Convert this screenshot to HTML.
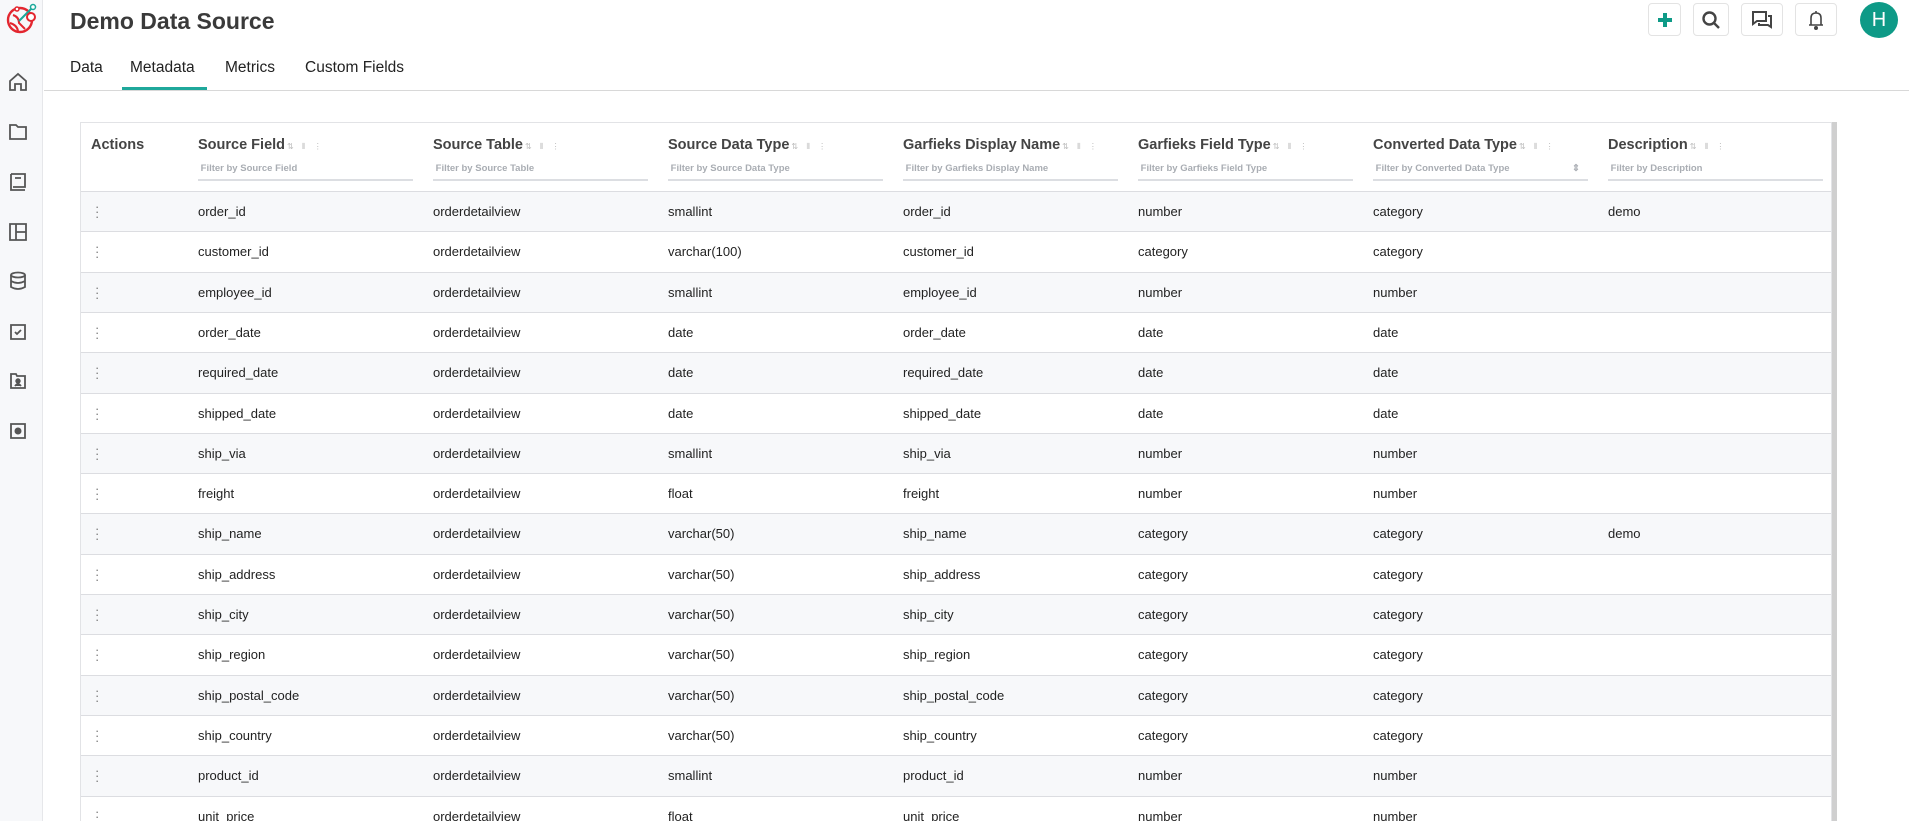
<!DOCTYPE html>
<html><head><meta charset="utf-8"><style>
*{margin:0;padding:0;box-sizing:border-box}
html,body{width:1909px;height:821px;overflow:hidden}
body{background:#fff;font-family:"Liberation Sans",sans-serif;color:#222;position:relative}
.side{position:absolute;left:0;top:0;width:43px;height:821px;background:#f7f8fa;border-right:1px solid #e6e7ea}
.side svg{position:absolute;left:8px}
.title{position:absolute;left:70px;top:8px;font-size:23px;font-weight:bold;color:#3a3a3a}
.tabs{position:absolute;left:44px;top:0;right:0;height:91px;border-bottom:1px solid #d8d8d8}
.tab{position:absolute;top:59px;font-size:15.5px;color:#222}
.ul{position:absolute;left:122px;top:87px;width:85px;height:3px;background:#1fa89b}
.ib{position:absolute;top:3px;height:33px;border:1px solid #e3e3e3;border-radius:4px;background:#fff}
.ib svg{position:absolute;left:50%;top:50%;transform:translate(-50%,-50%)}
.av{position:absolute;left:1860px;top:2px;width:38px;height:36px;border-radius:50%;background:#0e9a87;color:#fff;font-size:20px;text-align:center;line-height:36px}
.tbl{position:absolute;left:80px;top:122px;width:1752px;height:699px;border:1px solid #e2e3e6;border-bottom:none;overflow:hidden}
.sb{position:absolute;left:1832px;top:122px;width:5px;height:699px;background:#cfcfcf}
.hd{position:absolute;top:14px;font-size:14.5px;font-weight:bold;color:#444}
.hd i{font-style:normal;font-size:8px;color:#bbb;font-weight:normal;margin-left:2px;letter-spacing:3px}
.fl{position:absolute;top:40px;width:215px;height:18px;border-bottom:2px solid #dcdee2;font-size:9.5px;font-weight:bold;color:#a9adb3}
.row{position:absolute;left:0;width:1752px;height:41px;border-top:1px solid #dcdde1;font-size:13px}
.row span{position:absolute;top:12px}
.row .d{left:14px;top:12px;color:#777;font-size:13px;line-height:5px;width:4px;text-align:center}
</style></head><body>
<div class="side">
<svg style="left:5px;top:3px" width="32" height="32" viewBox="0 0 32 32"><circle cx="15" cy="17" r="12" fill="none" stroke="#e3262f" stroke-width="2.4"/><path d="M5 20 Q12 22 13 28 M8 12 Q14 14 14 20 L20 26" fill="none" stroke="#e3262f" stroke-width="2"/><path d="M14 18 L27 5" stroke="#1aa89a" stroke-width="2"/><circle cx="28" cy="4" r="2.5" fill="#fff" stroke="#1aa89a" stroke-width="1.5"/><circle cx="26" cy="14" r="4" fill="#fff" stroke="#e3262f" stroke-width="2"/><circle cx="12" cy="6" r="2" fill="#fff" stroke="#e3262f" stroke-width="1.5"/></svg>
<svg style="top:72px" width="20" height="20" viewBox="0 0 20 20" fill="none" stroke="#555" stroke-width="1.8"><path d="M2 9 L10 2 L18 9 V18 H13 V12 H7 V18 H2 Z"/></svg>
<svg style="top:122px" width="20" height="20" viewBox="0 0 20 20" fill="none" stroke="#555" stroke-width="1.8"><path d="M2 3 H8 L10 5 H18 V17 H2 Z"/></svg>
<svg style="top:172px" width="20" height="20" viewBox="0 0 20 20" fill="none" stroke="#555" stroke-width="1.8"><path d="M3 2 H17 V15 H5 M3 2 V18 H17 M7 6 H13"/></svg>
<svg style="top:222px" width="20" height="20" viewBox="0 0 20 20" fill="none" stroke="#555" stroke-width="1.8"><path d="M2 2 H18 V18 H2 Z M8 2 V18 M8 10 H18"/></svg>
<svg style="top:271px" width="20" height="20" viewBox="0 0 20 20" fill="none" stroke="#555" stroke-width="1.8"><ellipse cx="10" cy="4" rx="7" ry="2.5"/><path d="M3 4 V16 Q10 20 17 16 V4 M3 10 Q10 14 17 10"/></svg>
<svg style="top:322px" width="20" height="20" viewBox="0 0 20 20" fill="none" stroke="#555" stroke-width="1.8"><path d="M3 3 H17 V17 H3 Z M7 10 L9 12 L13 8"/></svg>
<svg style="top:371px" width="20" height="20" viewBox="0 0 20 20" fill="none" stroke="#555" stroke-width="1.8"><path d="M3 3 H8 L9 5 H17 V17 H3 Z"/><circle cx="10" cy="10" r="1.8" fill="#555"/><path d="M7 15 Q10 11 13 15" fill="#555"/></svg>
<svg style="top:421px" width="20" height="20" viewBox="0 0 20 20" fill="none" stroke="#555" stroke-width="1.8"><path d="M3 3 H17 V17 H3 Z"/><circle cx="10" cy="10" r="3.5" fill="#555" stroke="none"/></svg>
</div>
<div class="title">Demo Data Source</div>
<div class="tabs"></div>
<div class="tab" style="left:70px">Data</div>
<div class="tab" style="left:130px">Metadata</div>
<div class="tab" style="left:225px">Metrics</div>
<div class="tab" style="left:305px">Custom Fields</div>
<div class="ul"></div>
<div class="ib" style="left:1648px;width:33px"><svg width="18" height="18" viewBox="0 0 18 18"><path d="M9 2 V16 M2 9 H16" stroke="#0e9a87" stroke-width="4"/></svg></div>
<div class="ib" style="left:1693px;width:36px"><svg width="20" height="20" viewBox="0 0 20 20" fill="none" stroke="#444" stroke-width="2.4"><circle cx="8.5" cy="8.5" r="6"/><path d="M13 13 L18 18"/></svg></div>
<div class="ib" style="left:1741px;width:42px"><svg width="22" height="20" viewBox="0 0 22 20" fill="none" stroke="#444" stroke-width="2"><path d="M2 2 H15 V11 H6 L2 14 Z"/><path d="M17 6 H20 V17 L17 15 H8 V13" /></svg></div>
<div class="ib" style="left:1795px;width:42px"><svg width="18" height="20" viewBox="0 0 18 20" fill="none" stroke="#444" stroke-width="1.6"><path d="M4 15 V8 Q4 3 9 3 Q14 3 14 8 V15 H2 H16 M9 1 V3"/><circle cx="9" cy="18" r="1.2" fill="#444"/></svg></div>
<div class="av">H</div>
<div class="tbl">
<div class="hd" style="left:10px">Actions</div>
<div class="hd" style="left:117px">Source Field<i>⇅ ⦀ ⋮</i></div><div class="fl" style="left:117px">&nbsp;Filter by Source Field</div>
<div class="hd" style="left:352px">Source Table<i>⇅ ⦀ ⋮</i></div><div class="fl" style="left:352px">&nbsp;Filter by Source Table</div>
<div class="hd" style="left:587px">Source Data Type<i>⇅ ⦀ ⋮</i></div><div class="fl" style="left:587px">&nbsp;Filter by Source Data Type</div>
<div class="hd" style="left:822px">Garfieks Display Name<i>⇅ ⦀ ⋮</i></div><div class="fl" style="left:822px">&nbsp;Filter by Garfieks Display Name</div>
<div class="hd" style="left:1057px">Garfieks Field Type<i>⇅ ⦀ ⋮</i></div><div class="fl" style="left:1057px">&nbsp;Filter by Garfieks Field Type</div>
<div class="hd" style="left:1292px">Converted Data Type<i>⇅ ⦀ ⋮</i></div><div class="fl" style="left:1292px">&nbsp;Filter by Converted Data Type<span style="position:absolute;right:8px">⇕</span></div>
<div class="hd" style="left:1527px">Description<i>⇅ ⦀ ⋮</i></div><div class="fl" style="left:1527px">&nbsp;Filter by Description</div>
<div id="rows"></div>
</div>
<div class="sb"></div>
<script>
var d=[["order_id","smallint","number","category","demo"],["customer_id","varchar(100)","category","category",""],["employee_id","smallint","number","number",""],["order_date","date","date","date",""],["required_date","date","date","date",""],["shipped_date","date","date","date",""],["ship_via","smallint","number","number",""],["freight","float","number","number",""],["ship_name","varchar(50)","category","category","demo"],["ship_address","varchar(50)","category","category",""],["ship_city","varchar(50)","category","category",""],["ship_region","varchar(50)","category","category",""],["ship_postal_code","varchar(50)","category","category",""],["ship_country","varchar(50)","category","category",""],["product_id","smallint","number","number",""],["unit_price","float","number","number",""]];
var h="";d.forEach(function(r,i){var t=68+i*40.3;h+='<div class="row" style="top:'+t+'px;background:'+(i%2?'#fff':'#f7f8fa')+'"><span class="d">·<br>·<br>·</span><span style="left:117px">'+r[0]+'</span><span style="left:352px">orderdetailview</span><span style="left:587px">'+r[1]+'</span><span style="left:822px">'+r[0]+'</span><span style="left:1057px">'+r[2]+'</span><span style="left:1292px">'+r[3]+'</span><span style="left:1527px">'+r[4]+'</span></div>';});
document.getElementById("rows").innerHTML=h;
</script>
</body></html>
